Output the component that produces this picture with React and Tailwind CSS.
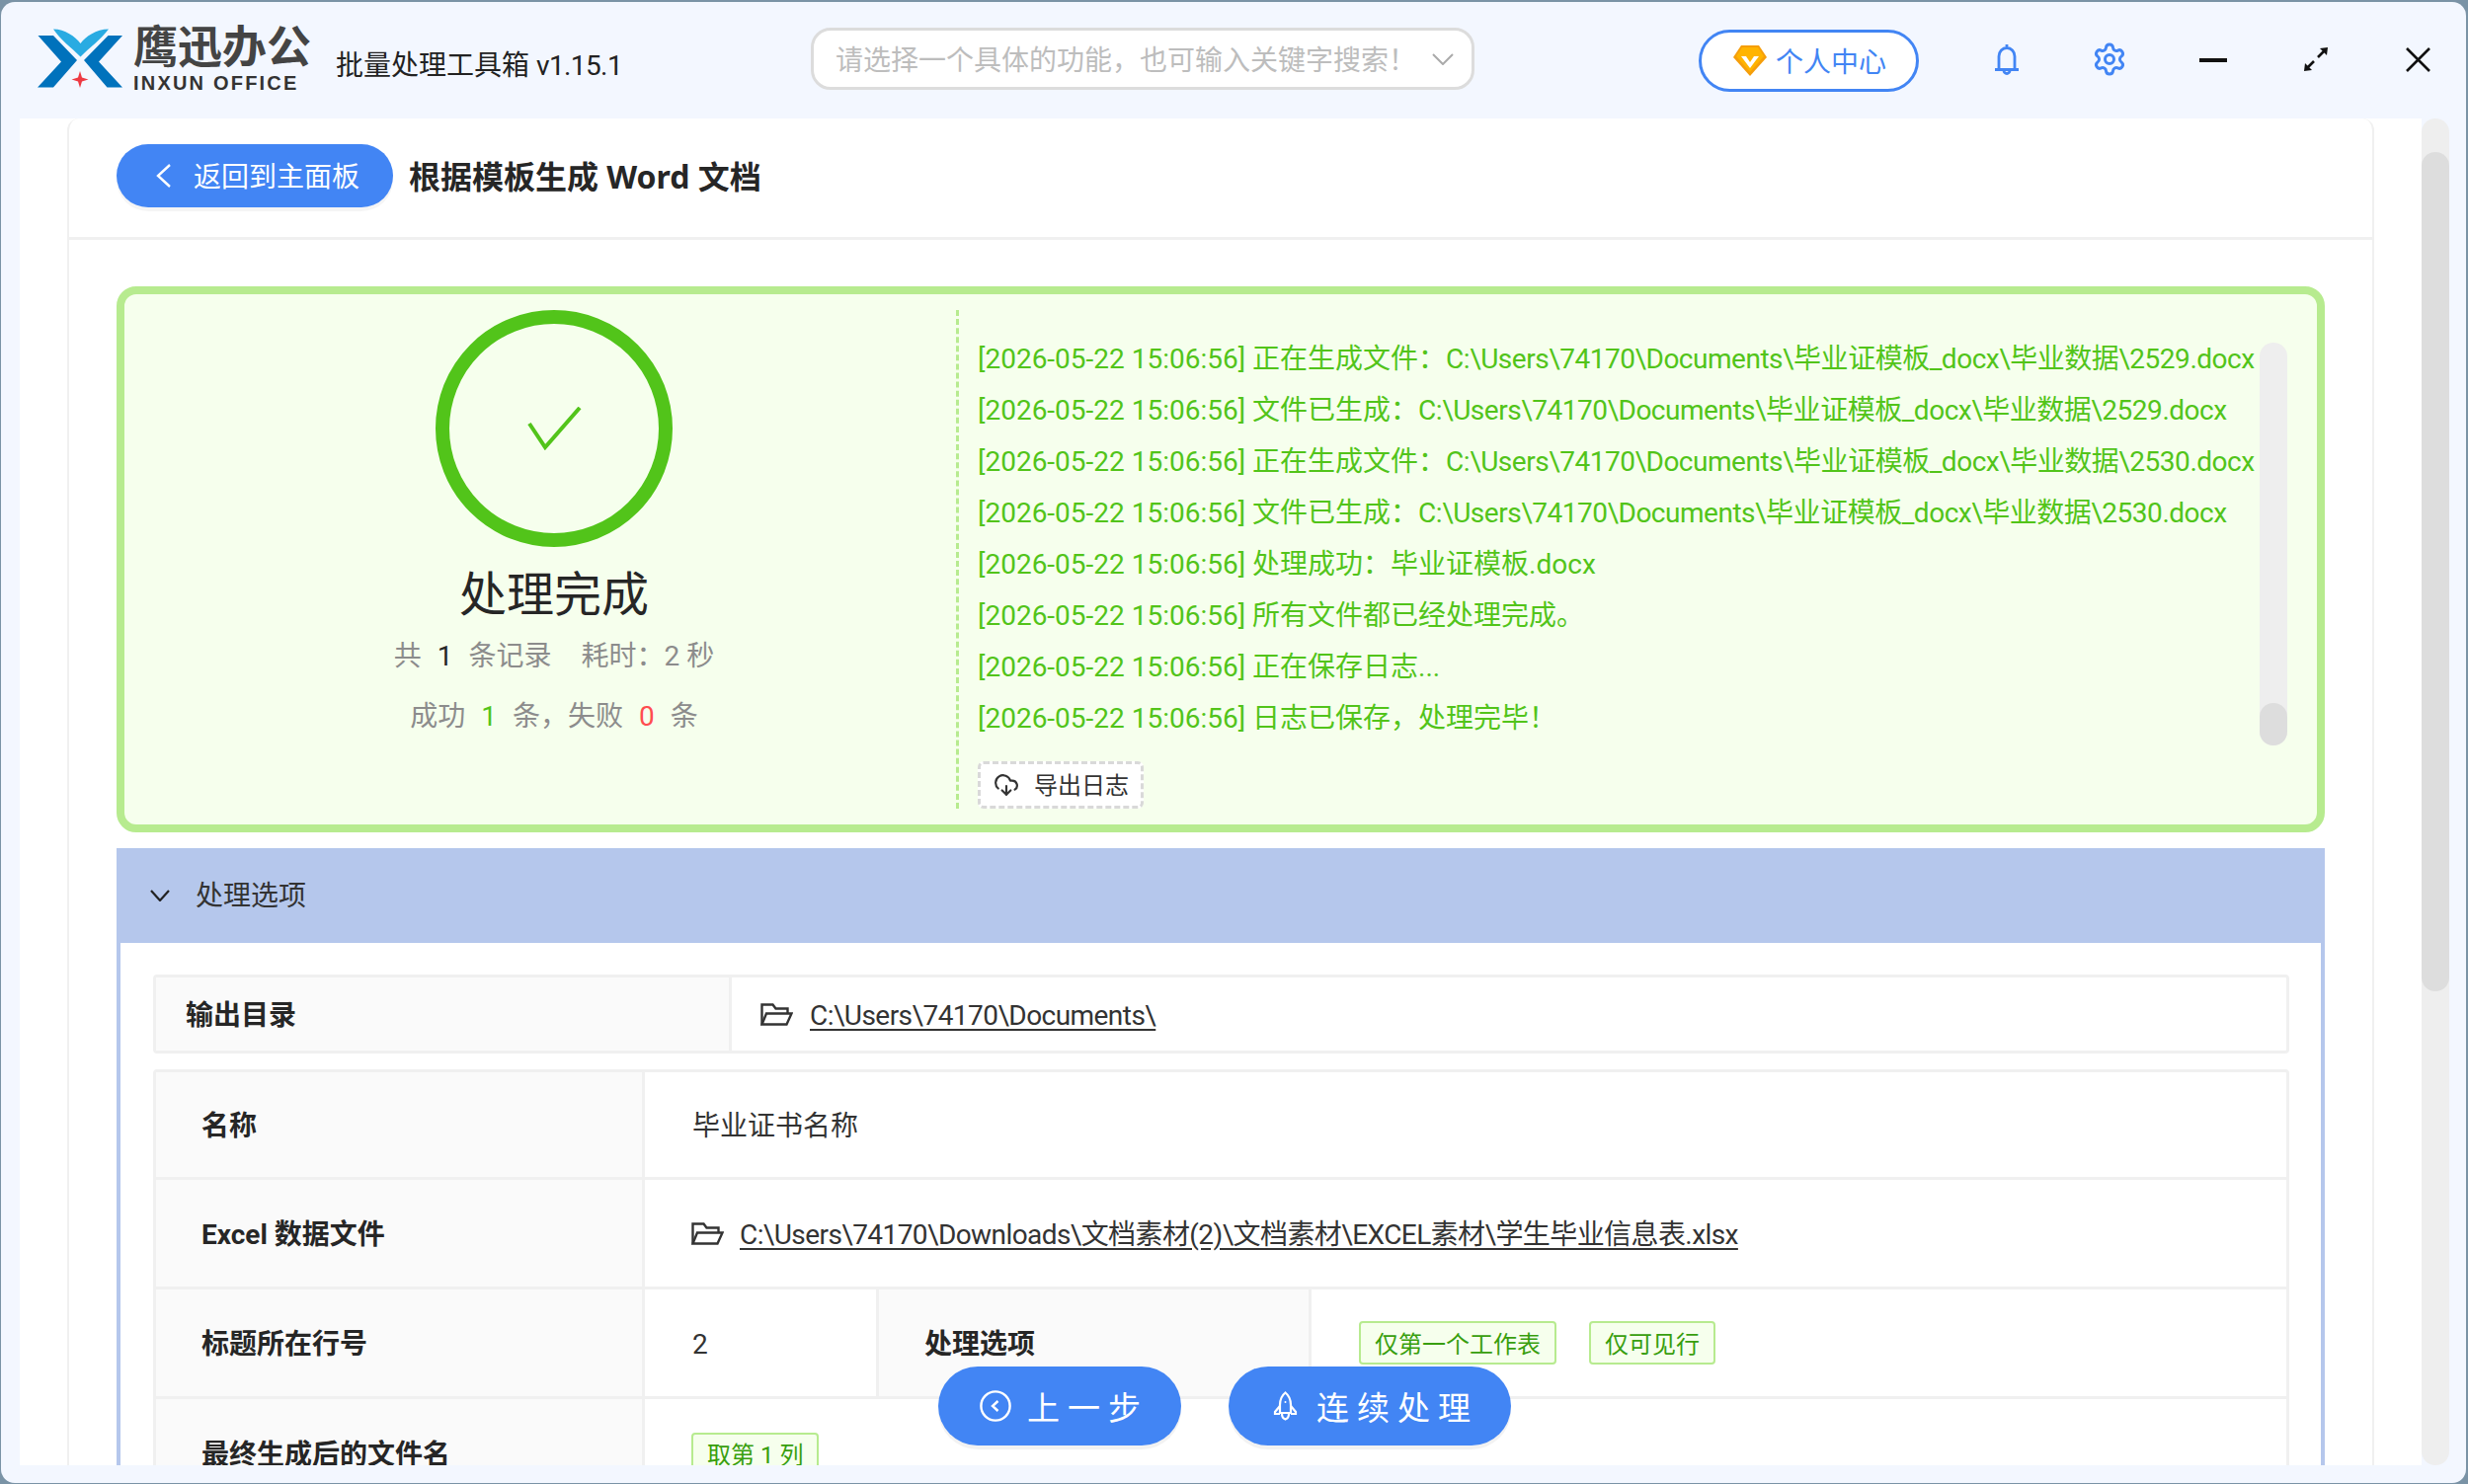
import React from 'react';
import { Settings, CloudDownload } from 'lucide-react';

const T = '[2026-05-22 15:06:56] ';
const logs = [
  { m: '正在生成文件\uFF1A', p: 'C:\\Users\\74170\\Documents\\毕业证模板_docx\\毕业数据\\2529.docx' },
  { m: '文件已生成\uFF1A', p: 'C:\\Users\\74170\\Documents\\毕业证模板_docx\\毕业数据\\2529.docx' },
  { m: '正在生成文件\uFF1A', p: 'C:\\Users\\74170\\Documents\\毕业证模板_docx\\毕业数据\\2530.docx' },
  { m: '文件已生成\uFF1A', p: 'C:\\Users\\74170\\Documents\\毕业证模板_docx\\毕业数据\\2530.docx' },
  { m: '处理成功\uFF1A毕业证模板.docx' },
  { m: '所有文件都已经处理完成\u3002' },
  { m: '正在保存日志...' },
  { m: '日志已保存\uFF0C处理完毕\uFF01' },
];

function Logo() {
  return (
    <svg width="90" height="80" viewBox="6 0 90 80" className="ml-[35px] shrink-0">
      <path d="M8.5 16 H24 L48 41 L24 68.5 H8 L32 42.5 Z" fill="#0072bc" />
      <path d="M94 16 H79.5 L55 41 L78.5 68.5 H94 L70 42.5 Z" fill="#0072bc" />
      <path d="M24 9.5 C36 9.5 46 17 51.5 24 C57 17 67 9.5 80 9.5 C72 20 61 28 51.5 37.5 C42 28 31 20 24 9.5 Z" fill="#29abe2" />
      <path d="M51 52 L53 58.5 L59.5 60.5 L53 62.5 L51 69 L49 62.5 L42.5 60.5 L49 58.5 Z" fill="#ee3a43" />
    </svg>
  );
}

function Folder() {
  return (
    <svg width="33" height="23" viewBox="0 0 33 23" fill="none" stroke="#333" strokeWidth="2.4" className="shrink-0">
      <path d="M1.5 21.5V1.5h11l3 4h12v5" />
      <path d="M1.5 21.5h25l5-11H6z" />
    </svg>
  );
}

function Tag({ children }) {
  return (
    <span className="h-[44px] px-[14px] pt-[3px] flex items-center rounded-[4px] border-2 border-[#b7eb8f] bg-[#f6ffed] text-[#389e0d] text-[24px] whitespace-nowrap">
      {children}
    </span>
  );
}

export default function App() {
  return (
    <div className="w-[2499px] h-[1503px] overflow-hidden bg-[#7a93a6] pt-[2px] pl-[1px] font-['Roboto','Noto_Sans_CJK_SC',sans-serif] text-[#333]">
      <div className="w-[2496px] h-[1500px] rounded-[14px] bg-[#f3f7ff] flex flex-col">
        {/* Title bar */}
        <div className="h-[118px] shrink-0 pb-[3px] flex items-center">
          <Logo />
          <div className="ml-[9px] w-[205px] shrink-0 pt-[1px] flex flex-col leading-none">
            <span className="text-[45px] leading-[46px] text-[#444] font-bold whitespace-nowrap">鹰迅办公</span>
            <span className="mt-[2px] text-[20px] leading-[20px] font-bold tracking-[2.2px] text-[#333] whitespace-nowrap font-['Liberation_Sans',sans-serif]">INXUN OFFICE</span>
          </div>
          <span className="mt-[14px] w-[481px] shrink-0 text-[28px] text-[#222] whitespace-nowrap">批量处理工具箱 <span className="tracking-[-0.6px]">v1.15.1</span></span>
          <div className="w-[672px] h-[63px] shrink-0 rounded-[20px] border-[3px] border-[#dcdcdc] bg-white flex items-center pl-[22px] pr-[18px]">
            <span className="flex-1 mt-[4px] text-[28px] text-[#bdbdbd] whitespace-nowrap">请选择一个具体的功能{'\uFF0C'}也可输入关键字搜索{'\uFF01'}</span>
            <svg width="22" height="12" viewBox="0 0 22 12" fill="none" stroke="#aaa" strokeWidth="2"><path d="M1 1l10 10L21 1" /></svg>
          </div>
          <div className="ml-[227px] mt-[4px] w-[223px] h-[63px] shrink-0 rounded-full border-[3px] border-[#4285f4] bg-white flex items-center pl-[32px]">
            <svg width="34" height="31" viewBox="0 0 34 31" className="shrink-0">
              <path d="M8 0h18l8 12-17 19L0 12z" fill="#f59e0b" />
              <path d="M9 2h16l6 9-14 16L3 11z" fill="#ffb400" />
              <path d="M8 11h5l4 6 4-6h5l-9 12z" fill="#fff" />
            </svg>
            <span className="ml-[9px] mt-[4px] text-[28px] text-[#4285f4] whitespace-nowrap">个人中心</span>
          </div>
          <svg width="24" height="31" viewBox="0 0 24 31" fill="none" stroke="#4285f4" strokeWidth="2.8" className="ml-[77px] mt-[1px] shrink-0">
            <path d="M12 0v4M4 25V12a8 8.500 0 0 1 16 0v13M0 25.500h24M9 26.500a3 3 0 0 0 6 0" />
          </svg>
          <Settings size={36} color="#4285f4" strokeWidth={2} className="ml-[74px] mt-[1px] shrink-0" />
          <div className="ml-[73px] mt-[3px] w-[28px] h-[4px] bg-[#111] shrink-0" />
          <svg width="26" height="26" viewBox="0 0 26 26" fill="#111" stroke="#111" strokeWidth="2.600" className="ml-[77px] mt-[1px] shrink-0">
            <path d="M11 15L3 23M15 11l7-7" fill="none" />
            <path d="M1 25l1-8 7 7z" strokeWidth="0" />
            <path d="M25 1l-1 8-7-7z" strokeWidth="0" />
          </svg>
          <svg width="25" height="25" viewBox="0 0 25 25" fill="none" stroke="#111" strokeWidth="2.600" className="ml-[78px] mt-[2px] shrink-0">
            <path d="M1 1l23 23M24 1L1 24" />
          </svg>
        </div>

        {/* Body */}
        <div className="h-[1364px] shrink-0 flex pl-[19px]">
          <div className="relative w-[2432px] h-full bg-white overflow-hidden">
            <div className="ml-[48px] w-[2336px] h-full border-x-2 border-[#f0f0f0] rounded-t-[12px] overflow-hidden">
              <div className="h-[123px] border-b-[3px] border-[#f0f0f0] flex items-center pl-[48px] pb-[4px]">
                <div className="w-[280px] h-[64px] rounded-full bg-[#4285f4] shadow-[0_4px_0_rgba(0,0,0,0.04)] flex items-center pl-[39px] text-white">
                  <svg width="17" height="24" viewBox="0 0 17 24" fill="none" stroke="#fff" strokeWidth="2.400"><path d="M15 1L3 12l12 11" /></svg>
                  <span className="ml-[22px] mt-[3px] text-[28px] whitespace-nowrap">返回到主面板</span>
                </div>
                <span className="ml-[16px] mt-[2px] text-[32px] font-bold text-[#262626] whitespace-nowrap font-['Noto_Sans','Noto_Sans_CJK_SC',sans-serif]">根据模板生成 Word 文档</span>
              </div>

              <div className="px-[48px] pt-[47px]">
                {/* Result box */}
                <div className="h-[553px] rounded-[20px] border-[8px] border-[#b7eb8f] bg-[#f6ffed] flex py-[16px]">
                  <div className="w-[842px] shrink-0 pl-[28px] flex flex-col items-center">
                    <div className="w-[240px] h-[240px] rounded-full border-[14px] border-[#52c41a] flex items-center justify-center">
                      <svg width="55" height="44" viewBox="0 0 55 44" fill="none" stroke="#52c41a" strokeWidth="4">
                        <path d="M2 17l16 24L53 1" />
                      </svg>
                    </div>
                    <div className="mt-[17px] h-[64px] leading-[64px] text-[48px] text-[#262626] whitespace-nowrap">处理完成</div>
                    <div className="mt-[8px] h-[44px] leading-[44px] text-[28px] text-[#8c8c8c] whitespace-nowrap">
                      共<span className="mx-[16px] text-[#262626]">1</span>条记录<span className="ml-[30px]">耗时{'\uFF1A'}2 秒</span>
                    </div>
                    <div className="mt-[17px] h-[44px] leading-[44px] text-[28px] text-[#8c8c8c] whitespace-nowrap">
                      成功<span className="mx-[16px] text-[#52c41a]">1</span>条{'\uFF0C'}失败<span className="mx-[16px] text-[#ff4d4f]">0</span>条
                    </div>
                  </div>
                  <div className="flex-1 min-w-0 border-l-[3px] border-dashed border-[#b7eb8f] pl-[19px] flex flex-col">
                    <div className="flex">
                      <div className="w-[1298px] shrink-0 pt-[24px] text-[28px] leading-[52px] text-[#52c41a]">
                        {logs.map((l, i) => (
                          <div key={i} className="h-[52px] whitespace-nowrap">
                            {T}{l.m}{l.p ? <span className="tracking-[-0.48px]">{l.p}</span> : null}
                          </div>
                        ))}
                      </div>
                      <div className="mt-[33px] w-[28px] h-[408px] rounded-full bg-[#eeeeee] flex flex-col justify-end shrink-0">
                        <div className="h-[43px] rounded-full bg-[#dddddd]" />
                      </div>
                    </div>
                    <div className="mt-[16px] w-[168px] h-[48px] rounded-[6px] border-[3px] border-dashed border-[#d9d9d9] bg-white flex items-center pl-[13px]">
                      <CloudDownload size={26} color="#333" strokeWidth={2} className="shrink-0" />
                      <span className="ml-[15px] mt-[2px] text-[24px] text-[#333] whitespace-nowrap">导出日志</span>
                    </div>
                  </div>
                </div>

                {/* Accordion */}
                <div className="mt-[16px]">
                  <div className="h-[96px] bg-[#b5c7ec] flex items-center pl-[34px] text-[28px] text-[#333]">
                    <svg width="20" height="12" viewBox="0 0 20 12" fill="none" stroke="#222" strokeWidth="2.200"><path d="M1 1l9 10 9-10" /></svg>
                    <span className="ml-[26px] mt-[2px] whitespace-nowrap">处理选项</span>
                  </div>
                  <div className="border-x-4 border-[#b5c7ec] bg-white pl-[33px] pr-[32px] pt-[32px] h-[700px] text-[28px]">
                    <div className="h-[80px] border-[3px] border-[#f0f0f0] rounded-[4px] flex">
                      <div className="w-[583px] shrink-0 bg-[#fafafa] border-r-[3px] border-[#f0f0f0] flex items-center pl-[30px] pt-[3px] font-bold text-[#262626]">输出目录</div>
                      <div className="flex-1 flex items-center pl-[29px]">
                        <Folder />
                        <span className="ml-[17px] mt-[3px] underline underline-offset-4 tracking-[-0.55px] whitespace-nowrap">C:\Users\74170\Documents\</span>
                      </div>
                    </div>

                    <div className="mt-[16px] border-[3px] border-[#f0f0f0] rounded-[4px]">
                      <div className="h-[109px] border-b-[3px] border-[#f0f0f0] flex">
                        <div className="w-[495px] shrink-0 bg-[#fafafa] border-r-[3px] border-[#f0f0f0] flex items-center pl-[46px] pt-[3px] font-bold text-[#262626]">名称</div>
                        <div className="flex-1 flex items-center pl-[48px] pt-[3px]">毕业证书名称</div>
                      </div>
                      <div className="h-[111px] border-b-[3px] border-[#f0f0f0] flex">
                        <div className="w-[495px] shrink-0 bg-[#fafafa] border-r-[3px] border-[#f0f0f0] flex items-center pl-[46px] pt-[3px] font-bold text-[#262626]">Excel 数据文件</div>
                        <div className="flex-1 flex items-center pl-[47px]">
                          <Folder />
                          <span className="ml-[16px] mt-[3px] underline underline-offset-4 tracking-[-0.58px] whitespace-nowrap">C:\Users\74170\Downloads\文档素材(2)\文档素材\EXCEL素材\学生毕业信息表.xlsx</span>
                        </div>
                      </div>
                      <div className="h-[111px] border-b-[3px] border-[#f0f0f0] flex">
                        <div className="w-[495px] shrink-0 bg-[#fafafa] border-r-[3px] border-[#f0f0f0] flex items-center pl-[46px] pt-[3px] font-bold text-[#262626]">标题所在行号</div>
                        <div className="w-[234px] shrink-0 flex items-center pl-[48px] pt-[3px]">2</div>
                        <div className="w-[441px] shrink-0 bg-[#fafafa] border-x-[3px] border-[#f0f0f0] flex items-center pl-[46px] pt-[3px] font-bold text-[#262626]">处理选项</div>
                        <div className="flex-1 flex items-center gap-[33px] pl-[48px]">
                          <Tag>仅第一个工作表</Tag>
                          <Tag>仅可见行</Tag>
                        </div>
                      </div>
                      <div className="h-[111px] flex">
                        <div className="w-[495px] shrink-0 bg-[#fafafa] border-r-[3px] border-[#f0f0f0] flex items-center pl-[46px] pt-[3px] font-bold text-[#262626]">最终生成后的文件名</div>
                        <div className="flex-1 flex items-center pl-[47px]">
                          <Tag>取第 1 列</Tag>
                        </div>
                      </div>
                    </div>
                  </div>
                </div>
              </div>
            </div>

            {/* Floating actions */}
            <div className="absolute left-[930px] bottom-[20px] flex gap-[48px] text-white text-[33px] tracking-[8px]">
              <div className="w-[246px] h-[80px] rounded-full bg-[#4285f4] shadow-[0_4px_0_rgba(0,0,0,0.05)] flex items-center pl-[42px]">
                <svg width="32" height="32" viewBox="0 0 32 32" fill="none" stroke="#fff" strokeWidth="2.400" className="shrink-0">
                  <circle cx="16" cy="16" r="14.600" />
                  <path d="M18.500 11L13 16l5.500 5" />
                </svg>
                <span className="ml-[16px] mt-[6px] whitespace-nowrap">上一步</span>
              </div>
              <div className="w-[286px] h-[80px] rounded-full bg-[#4285f4] shadow-[0_4px_0_rgba(0,0,0,0.05)] flex items-center pl-[45px]">
                <svg width="25" height="30" viewBox="0 0 25 30" fill="none" stroke="#fff" strokeWidth="2.200" className="shrink-0">
                  <path d="M12.500 1.500C8 5 7 10 7 14v8h11v-8c0-4-1-9-5.500-12.500z" />
                  <path d="M7 15L2 21v2h5M18 15l5 6v2h-5" />
                  <path d="M9 23c0 3 2 5 3.500 5.500C14 28 16 26 16 23" />
                  <circle cx="12.500" cy="11" r="1" fill="#fff" stroke="none" />
                </svg>
                <span className="ml-[19px] mt-[6px] whitespace-nowrap">连续处理</span>
              </div>
            </div>
          </div>

          {/* Page scrollbar */}
          <div className="w-[28px] h-full rounded-full bg-[#eeeeee] shrink-0 pt-[34px]">
            <div className="h-[850px] rounded-full bg-[#dddddd]" />
          </div>
        </div>
      </div>
    </div>
  );
}
